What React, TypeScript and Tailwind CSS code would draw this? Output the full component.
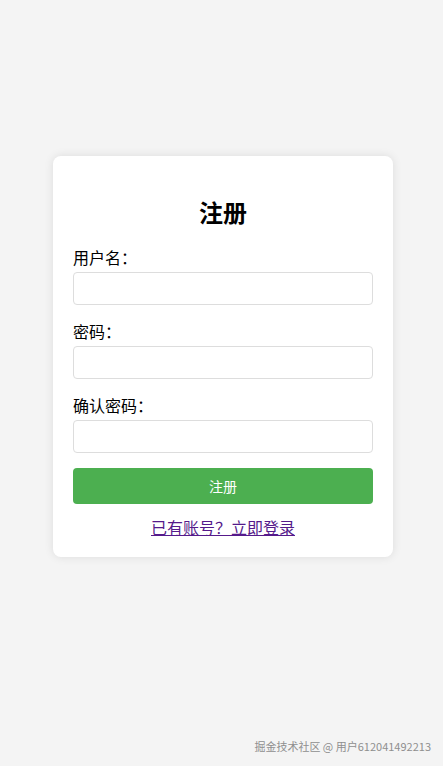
export default function App() {
  const fields = ['用户名：', '密码：', '确认密码：'];
  return (
    <div
      className="relative min-h-screen bg-[#f4f4f4] pt-[156px]"
      style={{ fontFamily: '"Noto Sans CJK SC", "Noto Sans", sans-serif' }}
    >
      <div className="ml-[53px] w-[340px] rounded-[8px] bg-white px-5 pb-[19px] pt-5 shadow-[0_0_10px_rgba(0,0,0,0.1)]">
        <h2 className="mb-[21px] mt-[22px] text-center text-[24px] font-bold leading-[28px] text-black">注册</h2>
        {fields.map((f, i) => (
          <div key={f} className={i === 2 ? 'mb-[15px]' : 'mb-[16px]'}>
            <label className="mb-[4px] block text-[16px] leading-[21px] text-black">{f}</label>
            <input
              type={i === 0 ? 'text' : 'password'}
              className="block h-[33px] w-full rounded-[4px] border border-[#ddd] bg-white px-2"
            />
          </div>
        ))}
        <button className="block h-[36px] w-full rounded-[4px] bg-[#4caf50] text-[14px] text-white">注册</button>
        <div className="mt-[13px] text-center text-[16px] leading-[21px]">
          <a href="#" className="text-[#551a8b] underline">已有账号？立即登录</a>
        </div>
      </div>
      <div className="absolute bottom-[12px] right-[12px] text-[11px] text-[#8f8f8f]">掘金技术社区 @ 用户612041492213</div>
    </div>
  );
}
